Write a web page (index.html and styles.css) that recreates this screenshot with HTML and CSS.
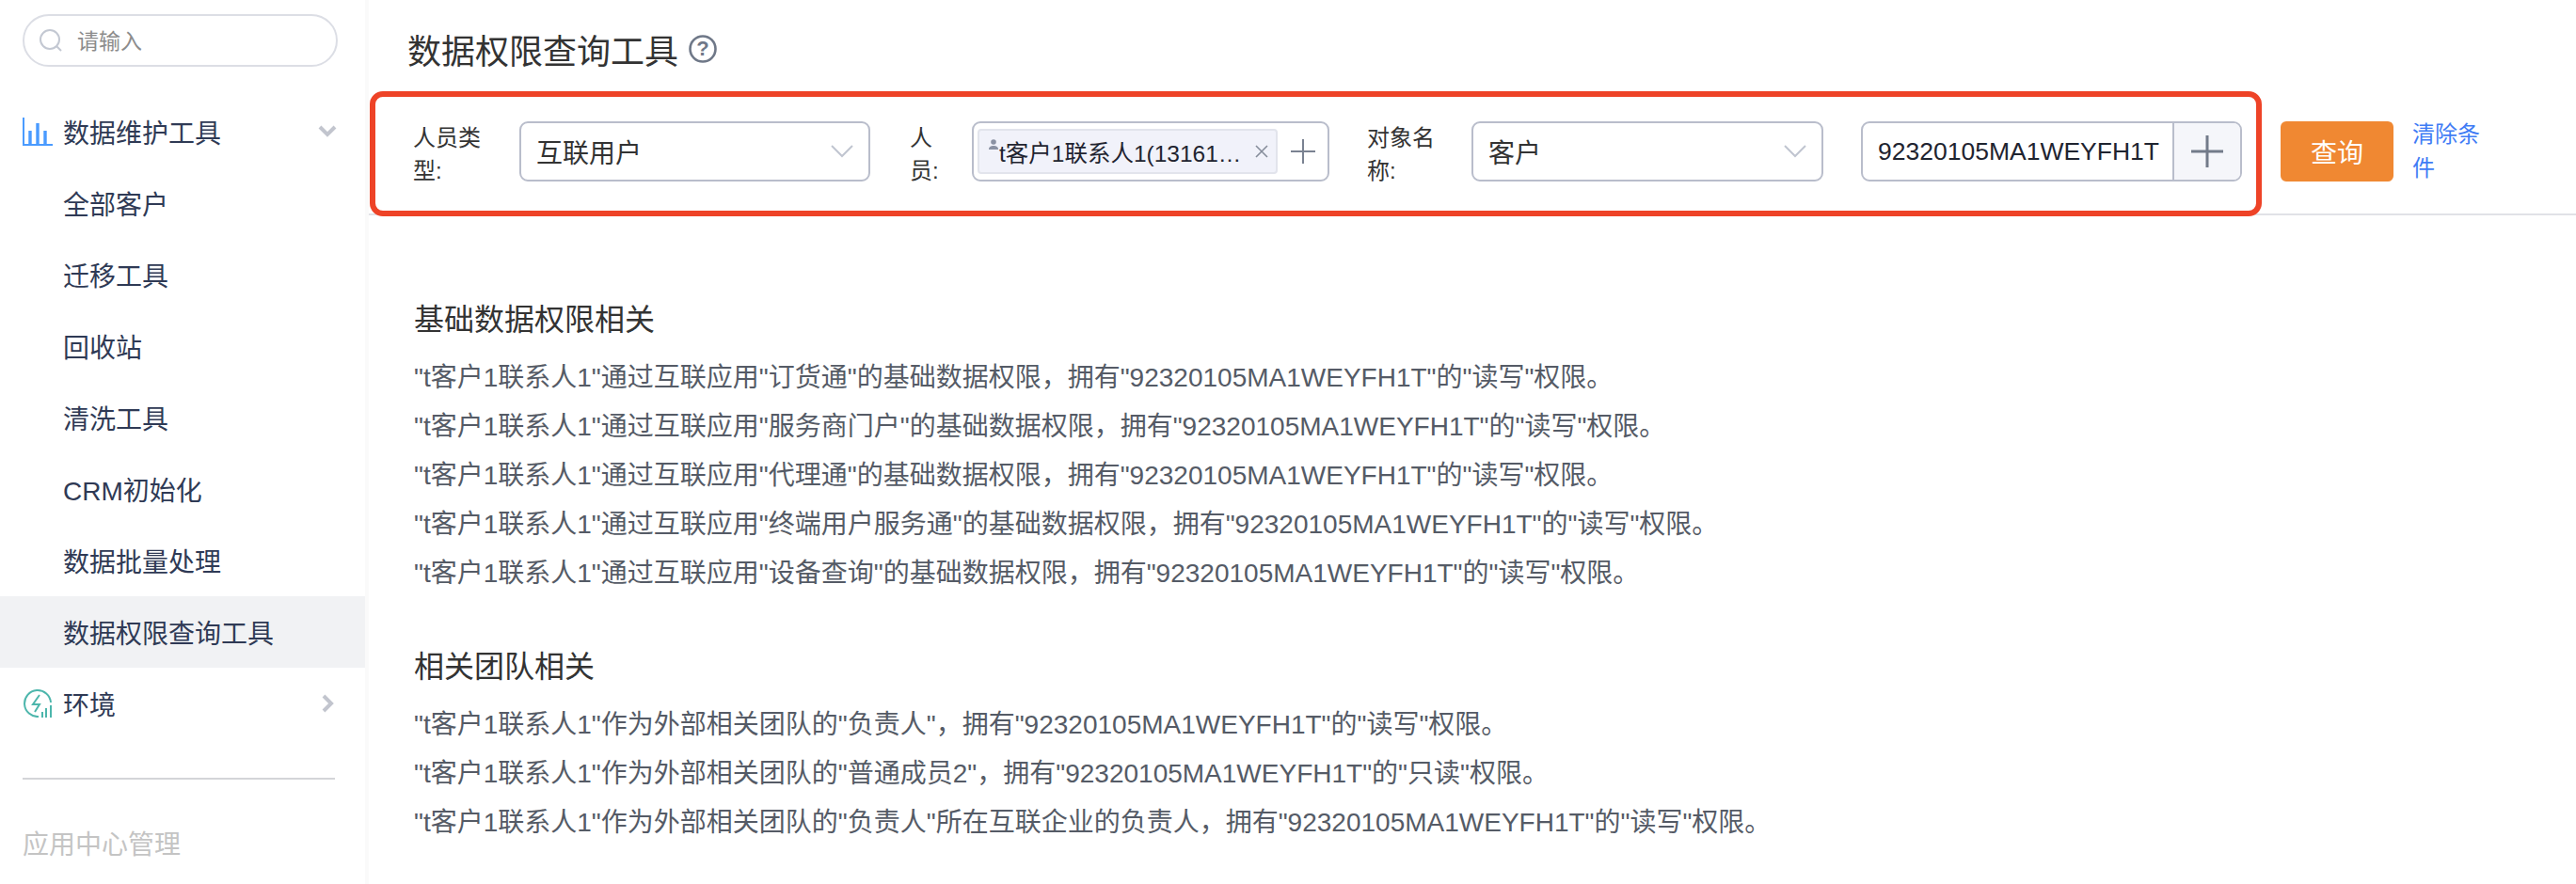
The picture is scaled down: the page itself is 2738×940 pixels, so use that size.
FILE: index.html
```html
<!DOCTYPE html>
<html lang="zh-CN">
<head>
    <meta charset="UTF-8">
    <meta name="viewport" content="width=device-width, initial-scale=1.0">
    <title>数据权限查询工具</title>
    <link rel="stylesheet" href="styles.css">
</head>
<body>
    <aside class="sidebar">
        <div class="search">
            <svg class="search-icon" width="24" height="24" viewBox="0 0 24 24"><circle cx="11" cy="11" r="10" fill="none" stroke="#c3c8d2" stroke-width="2"/><path d="M18 18l5 5" stroke="#c3c8d2" stroke-width="2"/></svg>
            <span>请输入</span>
        </div>
        <nav>
            <div class="nav-row">
                <svg class="nav-icon" width="32" height="30" viewBox="0 0 32 30"><path d="M1 0v29h31" fill="none" stroke="#4a9bff" stroke-width="2"/><path d="M8 29V14M16 29V6M24 29V14" fill="none" stroke="#4a9bff" stroke-width="3.4"/></svg>
                <span>数据维护工具</span>
                <svg class="chevron" width="20" height="14" viewBox="0 0 20 14"><path d="M2 2l8 8 8-8" fill="none" stroke="#c2c5ce" stroke-width="4"/></svg>
            </div>
            <div class="nav-row sub">全部客户</div>
            <div class="nav-row sub">迁移工具</div>
            <div class="nav-row sub">回收站</div>
            <div class="nav-row sub">清洗工具</div>
            <div class="nav-row sub">CRM初始化</div>
            <div class="nav-row sub">数据批量处理</div>
            <div class="nav-row sub active">数据权限查询工具</div>
            <div class="nav-row">
                <svg class="nav-icon" width="32" height="30" viewBox="0 0 32 30"><path d="M17 29A14 14 0 1 1 30 14" fill="none" stroke="#4db6ac" stroke-width="2"/><path d="M18 6l-7 10h7l-5 8" fill="none" stroke="#4db6ac" stroke-width="2"/><path d="M21 30v-6M25 30V20M30 30V17" fill="none" stroke="#4db6ac" stroke-width="2"/></svg>
                <span>环境</span>
                <svg class="chevron chevron-right" width="14" height="20" viewBox="0 0 14 20"><path d="M2 2l8 8-8 8" fill="none" stroke="#c2c5ce" stroke-width="4"/></svg>
            </div>
        </nav>
        <div class="side-divider"></div>
        <div class="side-label">应用中心管理</div>
    </aside>
    <main class="main">
        <h1 class="title">数据权限查询工具
            <svg class="help" width="30" height="30" viewBox="0 0 30 30"><circle cx="15" cy="15" r="13.5" fill="none" stroke="#6f7888" stroke-width="2.6"/><text x="15" y="22" text-anchor="middle" class="help-mark">?</text></svg>
        </h1>
        <div class="filter-bar">
            <div class="filter-box">
                <label class="field-label">人员类型:</label>
                <div class="select">互联用户<svg class="caret" width="24" height="14" viewBox="0 0 24 14"><path d="M1 1l11 11L23 1" fill="none" stroke="#c0c5d0" stroke-width="2"/></svg></div>
                <label class="field-label narrow">人员:</label>
                <div class="select picker">
                    <div class="tag">
                        <svg class="tag-user" width="10" height="12" viewBox="0 0 10 12"><circle cx="5" cy="3" r="2.8" fill="#8a91a3"/><path d="M0 11c0-3 2-4 5-4s5 1 5 4z" fill="#8a91a3"/></svg>
                        <span class="tag-text">t客户1联系人1(13161…</span>
                        <svg class="tag-close" width="16" height="16" viewBox="0 0 16 16"><path d="M2 2l12 12M14 2L2 14" stroke="#868d9b" stroke-width="1.6"/></svg>
                    </div>
                    <svg class="plus" width="26" height="26" viewBox="0 0 26 26"><path d="M13 0v26M0 13h26" stroke="#7a8291" stroke-width="2"/></svg>
                </div>
                <label class="field-label tight">对象名称:</label>
                <div class="select object">客户<svg class="caret" width="24" height="14" viewBox="0 0 24 14"><path d="M1 1l11 11L23 1" fill="none" stroke="#c0c5d0" stroke-width="2"/></svg></div>
                <div class="input-group">
                    <span class="input-value">92320105MA1WEYFH1T</span>
                    <span class="addon"><svg width="34" height="34" viewBox="0 0 34 34"><path d="M17 0v34M0 17h34" stroke="#737b8a" stroke-width="3"/></svg></span>
                </div>
            </div>
            <button class="query-btn">查询</button>
            <a class="clear-link">清除条件</a>
        </div>
        <section class="result">
            <h2>基础数据权限相关</h2>
            <p>"t客户1联系人1"通过互联应用"订货通"的基础数据权限，拥有"92320105MA1WEYFH1T"的"读写"权限。</p>
            <p>"t客户1联系人1"通过互联应用"服务商门户"的基础数据权限，拥有"92320105MA1WEYFH1T"的"读写"权限。</p>
            <p>"t客户1联系人1"通过互联应用"代理通"的基础数据权限，拥有"92320105MA1WEYFH1T"的"读写"权限。</p>
            <p>"t客户1联系人1"通过互联应用"终端用户服务通"的基础数据权限，拥有"92320105MA1WEYFH1T"的"读写"权限。</p>
            <p>"t客户1联系人1"通过互联应用"设备查询"的基础数据权限，拥有"92320105MA1WEYFH1T"的"读写"权限。</p>
        </section>
        <section class="result">
            <h2>相关团队相关</h2>
            <p>"t客户1联系人1"作为外部相关团队的"负责人"，拥有"92320105MA1WEYFH1T"的"读写"权限。</p>
            <p>"t客户1联系人1"作为外部相关团队的"普通成员2"，拥有"92320105MA1WEYFH1T"的"只读"权限。</p>
            <p>"t客户1联系人1"作为外部相关团队的"负责人"所在互联企业的负责人，拥有"92320105MA1WEYFH1T"的"读写"权限。</p>
        </section>
    </main>
</body>
</html>
```

FILE: styles.css
```css
html, body { height: 100%; }
body { margin: 0; display: flex; height: 940px; overflow: hidden; background: #fff; color: #333; font-family: "Liberation Sans", "Noto Sans CJK SC", sans-serif; }

.sidebar { width: 388px; flex: none; padding-top: 15px; border-right: 4px solid #fafafa; }
.search { display: flex; align-items: center; box-sizing: border-box; width: 335px; height: 56px; margin: 0 0 31px 24px; padding: 0 0 3px 16px; border: 2px solid #dcdee5; border-radius: 28px; color: #8c8c8c; font-size: 23px; }
.search-icon { margin: 3px 16px 0 0; }
.nav-row { display: flex; align-items: center; height: 76px; padding-left: 24px; color: #2f3a55; font-size: 28px; }
.nav-icon { margin-right: 11px; }
.nav-row.sub { padding-left: 67px; }
.nav-row.active { background: #f1f2f4; }
.chevron { margin-left: auto; margin-right: 30px; }
.chevron-right { margin-right: 32px; }
.side-divider { height: 2px; margin: 41px 32px 0 24px; background: #d4d5d8; }
.side-label { margin: 52px 0 0 24px; color: #c4c4c4; font-size: 28px; line-height: 36px; }

.main { flex: 1; min-width: 0; }
.title { display: flex; align-items: center; gap: 11px; box-sizing: border-box; height: 97px; margin: 0; padding: 7px 0 0 41px; color: #333; font-size: 36px; font-weight: 400; }
.help-mark { fill: #6f7888; font-size: 22px; font-weight: 700; font-family: "Liberation Sans", sans-serif; }

.filter-bar { display: flex; align-items: flex-start; box-sizing: border-box; height: 132px; border-bottom: 2px solid #e1e2e7; }
.filter-box { display: flex; align-items: flex-start; flex: none; box-sizing: border-box; width: 2011px; height: 133px; margin-left: 1px; padding: 26px 0 0 40px; border: 6px solid #ee4327; border-radius: 14px; background: #fff; }
.field-label { flex: none; width: 87px; margin: 0 26px 0 0; color: #333; font-size: 24px; line-height: 35px; word-break: break-all; }
.field-label.narrow { width: 42px; margin-right: 24px; }
.field-label.tight { margin-right: 24px; }
.select { display: flex; align-items: center; flex: none; box-sizing: border-box; width: 373px; height: 64px; margin-right: 42px; padding: 0 16px 0 16px; border: 2px solid #b9bdcb; border-radius: 9px; color: #333; font-size: 28px; }
.select.picker { width: 380px; margin-right: 40px; padding: 0 0 0 4px; }
.select.object { width: 374px; margin-right: 40px; }
.caret { margin-left: auto; }
.tag { display: flex; flex: none; box-sizing: border-box; width: 319px; height: 48px; padding-left: 10px; border: 2px solid #e2e4ec; border-radius: 4px; background: #f1f2fa; align-items: center; }
.tag-user { align-self: flex-start; margin-top: 9px; margin-right: 1px; }
.tag-text { color: #1f2430; font-size: 24.5px; white-space: nowrap; }
.tag-close { margin-left: auto; margin-right: 7px; }
.plus { margin-left: 14px; }
.input-group { display: flex; flex: none; box-sizing: border-box; width: 405px; height: 64px; border: 2px solid #b9bdcb; border-radius: 9px; overflow: hidden; }
.input-value { flex: 1; min-width: 0; padding-left: 16px; color: #1f2430; font-size: 26.5px; line-height: 61px; white-space: nowrap; }
.addon { display: flex; align-items: center; justify-content: center; flex: none; width: 70px; border-left: 2px solid #b9bdcb; background: #f5f6fa; }

.query-btn { flex: none; width: 120px; height: 64px; margin: 32px 20px 0; padding: 0; border: none; border-radius: 6px; background: #f08832; color: #fff; font: inherit; font-size: 28px; }
.clear-link { flex: none; width: 76px; margin-top: 28px; color: #3f7cf5; font-size: 24px; line-height: 36px; }

.result { padding-left: 48px; }
.result h2 { margin: 0 0 14px; color: #333; font-size: 32px; font-weight: 400; line-height: 44px; }
.result p { margin: 0; color: #555b66; font-size: 28px; line-height: 52px; }
.filter-bar + .result { margin-top: 89px; }
.result + .result { margin-top: 51px; }
```
